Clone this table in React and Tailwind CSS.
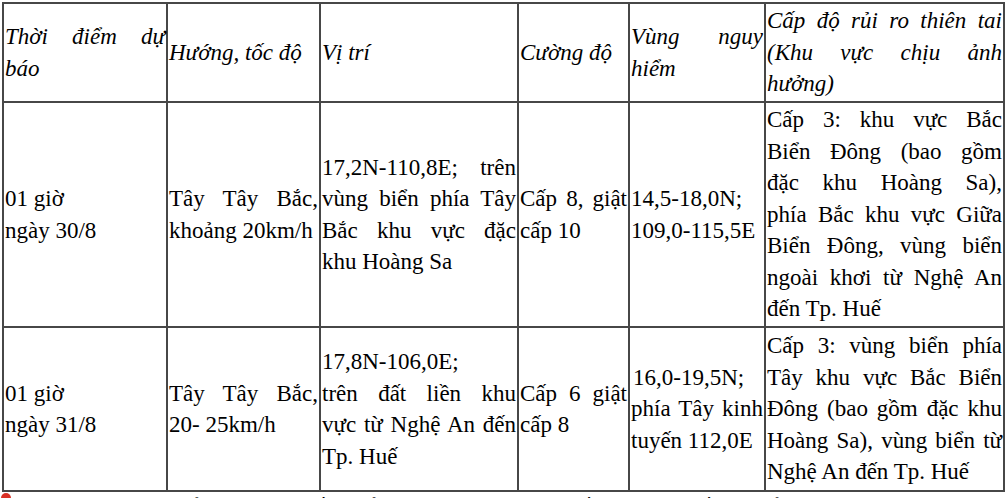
import React from "react";

const J = "text-justify [text-align-last:justify]";

function Cell({ lines, justify = [], italic = false, className = "" }) {
  return (
    <td
      className={
        "border-2 border-[#474747] px-[1px] py-[1px] align-middle " +
        (italic ? "italic " : "") +
        className
      }
    >
      {lines.map((l, i) => (
        <div key={i} className={justify.includes(i) ? J : "text-left"}>
          {l}
        </div>
      ))}
    </td>
  );
}

export default function App() {
  return (
    <div className="bg-white text-black font-['Liberation_Serif','Times_New_Roman',serif] text-[23px] leading-[31.5px] w-[1007px] h-[498px] overflow-hidden">
      <table className="border-collapse table-fixed w-[1002px] ml-[2px] mt-[2px]">
        <colgroup>
          <col className="w-[164px]" />
          <col className="w-[153px]" />
          <col className="w-[198px]" />
          <col className="w-[111px]" />
          <col className="w-[136px]" />
          <col className="w-[239px]" />
        </colgroup>
        <tbody>
          <tr className="h-[99px]">
            <Cell italic lines={["Thời điểm dự", "báo"]} justify={[0]} />
            <Cell italic lines={["Hướng, tốc độ"]} />
            <Cell italic lines={["Vị trí"]} />
            <Cell italic lines={["Cường độ"]} />
            <Cell italic lines={["Vùng nguy", "hiểm"]} justify={[0]} />
            <Cell
              italic
              lines={["Cấp độ rủi ro thiên tai", "(Khu vực chịu ảnh", "hưởng)"]}
              justify={[0, 1]}
            />
          </tr>
          <tr className="h-[225px]">
            <Cell lines={["01 giờ", "ngày 30/8"]} />
            <Cell lines={["Tây Tây Bắc,", "khoảng 20km/h"]} justify={[0]} />
            <Cell
              lines={["17,2N-110,8E; trên", "vùng biển phía Tây", "Bắc khu vực đặc", "khu Hoàng Sa"]}
              justify={[0, 1, 2]}
            />
            <Cell lines={["Cấp 8, giật", "cấp 10"]} justify={[0]} />
            <Cell lines={["14,5-18,0N;", "109,0-115,5E"]} />
            <Cell
              lines={[
                "Cấp 3: khu vực Bắc",
                "Biển Đông (bao gồm",
                "đặc khu Hoàng Sa),",
                "phía Bắc khu vực Giữa",
                "Biển Đông, vùng biển",
                "ngoài khơi từ Nghệ An",
                "đến Tp. Huế",
              ]}
              justify={[0, 1, 2, 3, 4, 5]}
            />
          </tr>
          <tr className="h-[164px]">
            <Cell lines={["01 giờ", "ngày 31/8"]} />
            <Cell lines={["Tây Tây Bắc,", "20- 25km/h"]} justify={[0]} />
            <Cell
              lines={["17,8N-106,0E;", "trên đất liền khu", "vực từ Nghệ An đến", "Tp. Huế"]}
              justify={[1, 2]}
            />
            <Cell lines={["Cấp 6 giật", "cấp 8"]} justify={[0]} />
            <Cell
              lines={[
                <span key="a" className="pl-[2px]">16,0-19,5N;</span>,
                "phía Tây kinh",
                "tuyến 112,0E",
              ]}
              justify={[1]}
            />
            <Cell
              lines={[
                "Cấp 3: vùng biển phía",
                "Tây khu vực Bắc Biển",
                "Đông (bao gồm đặc khu",
                "Hoàng Sa), vùng biển từ",
                "Nghệ An đến Tp. Huế",
              ]}
              justify={[0, 1, 2, 3]}
            />
          </tr>
        </tbody>
      </table>
      <p className="flex items-start gap-[8px] pl-[1px] -mt-[1px]">
        <span className="mt-[2px] inline-block w-[10px] h-[10px] rounded-full bg-[#d93025] shrink-0" />
        <span>Cảnh báo: vùng biển phía Tây Bắc Biển Đông có gió mạnh cấp 6-7, giật cấp 9; biển động.</span>
      </p>
    </div>
  );
}
